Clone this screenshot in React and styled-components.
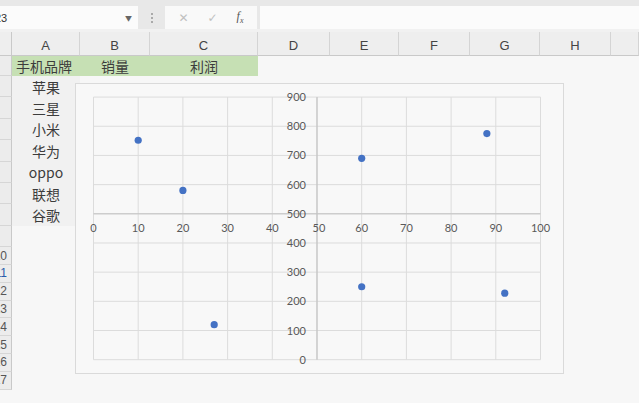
import React from 'react'
import styled, { createGlobalStyle } from 'styled-components'

const Global = createGlobalStyle`
	html, body { margin: 0; padding: 0; background: #f7f7f7; }
	body { font-family: "Noto Sans", "Noto Sans CJK SC", sans-serif; }
`

const cols = [12, 68, 70, 108, 72, 69, 71, 70, 71, 28]
const letters = ['', 'A', 'B', 'C', 'D', 'E', 'F', 'G', 'H', '']
const brands = ['苹果', '三星', '小米', '华为', 'oppo', '联想', '谷歌']
const points = [[10, 752], [20, 580], [27, 120], [60, 690], [88, 775], [60, 250], [92, 228]]

const Page = styled.div`
	width: 639px; height: 403px; overflow: hidden; position: relative; background: #f7f7f7;
`
const FormulaBar = styled.div`
	height: 32px; background: #e8e8e8; display: flex; align-items: flex-start; gap: 0;
	border-bottom: 3px solid #f1f1f1; box-sizing: border-box; padding-top: 6px;
`
const NameBox = styled.div`
	width: 138px; height: 23px; background: #fbfbfb; display: flex; align-items: center;
	justify-content: space-between; box-sizing: border-box; padding-right: 6px;
	font-size: 11px; color: #333; overflow: hidden;
	span { margin-left: -5px; font-family: "Liberation Sans", sans-serif; }
	i { font-style: normal; font-size: 7px; color: #666; }
`
const Dots = styled.div`
	width: 27px; height: 23px; display: flex; flex-direction: column; align-items: center; justify-content: center; gap: 2px;
	b { width: 2px; height: 2px; background: #aaa; display: block; }
`
const FxBox = styled.div`
	width: 92px; height: 23px; background: #f9f9f9; display: flex; align-items: center;
	justify-content: space-around; padding: 0 4px; box-sizing: border-box;
	font-size: 12px; color: #c0c0c0; font-family: "DejaVu Sans", sans-serif;
	em { color: #555; font-family: "Liberation Serif", serif; font-size: 12px; }
`
const FormulaInput = styled.div`
	flex: 1; height: 23px; background: #fbfbfb; margin-left: 3px;
`

const Grid = styled.div`
	display: grid;
	grid-template-columns: ${ cols.map(c => c + 'px').join(' ') };
`
const ColHead = styled.div`
	height: 24px; background: #eeeeee; border-bottom: 1px solid #c9c9c9; box-sizing: border-box;
	border-right: 1px solid ${ p => p.$corner ? '#c9c9c9' : '#d4d4d4' };
	display: flex; align-items: center; justify-content: center; padding-top: 4px;
	font-family: "Liberation Sans", sans-serif; font-size: 13px; color: #444;
`
const RowHead = styled.div`
	height: ${ p => p.$h }px; background: #ececec; border-right: 1px solid #c9c9c9;
	border-bottom: 1px solid #d6d6d6; box-sizing: border-box; overflow: hidden;
	display: flex; align-items: center; justify-content: flex-end; padding-right: 4px;
	font-family: "Liberation Sans", sans-serif; font-size: 12px; color: ${ p => p.$sel ? '#2a5caa' : '#555' };
	white-space: nowrap;
`
const Cell = styled.div`
	height: ${ p => p.$h }px; background: ${ p => p.$bg || 'transparent' };
	display: flex; align-items: center; justify-content: ${ p => p.$left ? 'flex-start' : 'center' };
	padding-left: ${ p => p.$left ? '4px' : '0' };
	font-size: 14px; color: #3c3c3c; font-family: "Noto Sans CJK SC", "Noto Sans", sans-serif;
	white-space: nowrap;
`

const ChartBox = styled.div`
	position: absolute; left: 75px; top: 83px; width: 489px; height: 291px;
	border: 1.5px solid #dadada; box-sizing: border-box; background: #f8f8f8;
	svg { display: block; }
`

const X0 = 92.5 - 75
const SX = 4.47
const Y0 = 358.7 - 83
const SY = 0.2918
const px = x => X0 + SX * x
const py = y => Y0 - SY * y

const Chart = () => {
	const xs = Array.from({ length: 11 }, (_, i) => i * 10)
	const ys = Array.from({ length: 10 }, (_, i) => i * 100)
	return (
		<ChartBox>
			<svg width="489" height="291" viewBox="0 0 489 291">
				{ xs.map(x => (
					<line key={ 'vx' + x } x1={ px(x) } x2={ px(x) } y1={ py(900) } y2={ py(0) } stroke="#dcdcdc" strokeWidth="1" />
				)) }
				{ ys.map(y => (
					<line key={ 'hy' + y } x1={ px(0) } x2={ px(100) } y1={ py(y) } y2={ py(y) } stroke="#dcdcdc" strokeWidth="1" />
				)) }
				<line x1={ px(50) } x2={ px(50) } y1={ py(900) } y2={ py(0) } stroke="#bdbdbd" strokeWidth="1" />
				<line x1={ px(0) } x2={ px(100) } y1={ py(500) } y2={ py(500) } stroke="#c4c4c4" strokeWidth="1" />
				<g fontFamily="Lato, 'Noto Sans', sans-serif" fontSize="11" fill="#595959">
					{ xs.map(x => (
						<text key={ 'lx' + x } x={ px(x) + (x === 50 ? 2 : 0) } y={ py(500) + 18 } textAnchor="middle">{ x }</text>
					)) }
					{ ys.map(y => (
						<text key={ 'ly' + y } x={ px(50) - 11 } y={ py(y) + 4 } textAnchor="end">{ y }</text>
					)) }
				</g>
				{ points.map(([x, y], i) => (
					<circle key={ i } cx={ px(x) } cy={ py(y) } r="3.6" fill="#4472c4" />
				)) }
			</svg>
		</ChartBox>
	)
}

const App = () => {
	const rowH = n => (n === 1 ? 20 : n <= 9 ? 21.4 : 17.8)
	const rows = Array.from({ length: 17 }, (_, i) => i + 1)
	return (
		<Page>
			<Global />
			<FormulaBar>
				<NameBox><span>23</span><i>▼</i></NameBox>
				<Dots><b /><b /><b /></Dots>
				<FxBox><span>✕</span><span>✓</span><em>f<sub style={ { fontSize: 8 } }>x</sub></em></FxBox>
				<FormulaInput />
			</FormulaBar>
			<Grid>
				{ letters.map((l, i) => <ColHead key={ 'c' + i } $corner={ i === 0 }>{ l }</ColHead>) }
				{ rows.map(n => {
					const h = rowH(n)
					return (
						<React.Fragment key={ n }>
							<RowHead $h={ h } $sel={ n === 11 }>{ n >= 10 ? n : '' }</RowHead>
							{ cols.slice(1).map((_, ci) => {
								if (n === 1 && ci === 0) return <Cell key={ ci } $h={ h } $bg="#c6e0b4" $left>手机品牌</Cell>
								if (n === 1 && ci === 1) return <Cell key={ ci } $h={ h } $bg="#c6e0b4">销量</Cell>
								if (n === 1 && ci === 2) return <Cell key={ ci } $h={ h } $bg="#c6e0b4">利润</Cell>
								if (n >= 2 && n <= 8 && ci === 0) return <Cell key={ ci } $h={ h } $bg="#f1f1f1">{ brands[n - 2] }</Cell>
								return <Cell key={ ci } $h={ h } />
							}) }
						</React.Fragment>
					)
				}) }
			</Grid>
			<Chart />
		</Page>
	)
}

export default App
